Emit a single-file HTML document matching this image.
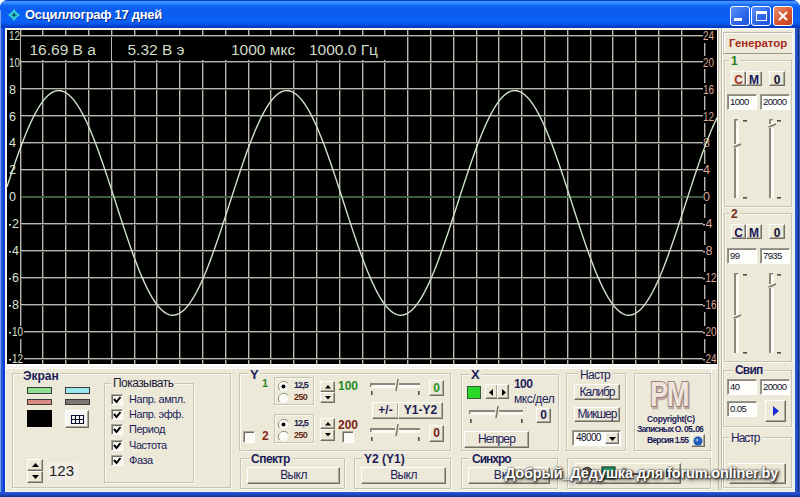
<!DOCTYPE html>
<html><head><meta charset="utf-8">
<style>
*{margin:0;padding:0;box-sizing:border-box}
html,body{width:800px;height:497px;overflow:hidden;background:#fff;font-family:"Liberation Sans",sans-serif}
.a{position:absolute}
#win{position:absolute;left:0;top:0;width:800px;height:497px;background:#0b3fd6;border-radius:8px 8px 0 0;overflow:hidden}
#title{position:absolute;left:0;top:0;width:800px;height:28px;
 background:linear-gradient(#0a3fc8 0px,#0a3fc8 1px,#3d93ff 1px,#3a8ffc 3px,#1268f6 5px,#0a5cf0 10px,#0c62f6 20px,#0a58ec 24px,#063ec8 26px,#0038c0 28px)}
#client{position:absolute;left:5px;top:28px;width:790px;height:464px;background:#ece9d8;border-left:1px solid #f6f7fb;border-bottom:1px solid #f6f7fb}
.tb{position:absolute;top:6px;width:20px;height:20px;border:1px solid #fff;border-radius:3px}
.grp{position:absolute;border:1px solid #c6c4b4;box-shadow:inset 1px 1px 0 #f8f8f2, 1px 1px 0 #f8f8f2}
.gl{position:absolute;background:#ece9d8;padding:0 2px;font-size:12px;line-height:12px;white-space:nowrap}
.btn{position:absolute;background:#ece9d8;border:1px solid;border-color:#fff #716f64 #716f64 #fff;box-shadow:inset -1px -1px 0 #aca899;
 font-size:12px;color:#1c1c5a;text-align:center;white-space:nowrap}
.ed{position:absolute;background:#fdfdfa;border:1px solid;border-color:#9a988a #fff #fff #9a988a;box-shadow:inset 1px 1px 0 #8a887c;
 font-size:9.5px;line-height:14px;color:#101028;padding-left:2px;white-space:nowrap;letter-spacing:-0.6px}
.t{position:absolute;white-space:nowrap}
.bold{font-weight:bold}
.navy{color:#1c1c5a}
.trk{position:absolute;border:1px solid;border-color:#8a887c #fff #fff #8a887c;background:#ece9d8}
.tick{position:absolute;background:#333;}
.cb{position:absolute;width:13px;height:13px;background:#fbfbf6;border:1px solid;border-color:#aca899 #fff #fff #aca899;box-shadow:inset 1px 1px 0 #716f64}
</style></head><body>
<div id="win">
 <div id="title">
  <svg class="a" style="left:8px;top:9px" width="12" height="12" viewBox="0 0 12 12">
   <path d="M6 0 L8.5 3.5 L12 6 L8.5 8.5 L6 12 L3.5 8.5 L0 6 L3.5 3.5 Z" fill="#3ad8d0"/>
   <path d="M6 2.5 L7.5 4.5 L9.5 6 L7.5 7.5 L6 9.5 L4.5 7.5 L2.5 6 L4.5 4.5 Z" fill="#1aa8b8"/>
   <circle cx="6" cy="6" r="1.3" fill="#0a3a60"/>
  </svg>
  <div class="t bold" style="left:25px;top:7px;font-size:13px;color:#fff;letter-spacing:-0.3px;text-shadow:1px 1px 0 #0a2a8a">Осциллограф 17 дней</div>
  <div class="tb" style="left:730px;background:linear-gradient(135deg,#5b93f8,#2a64e8 60%,#1b52d8)"><div class="a" style="left:3px;top:11px;width:8px;height:3px;background:#fff"></div></div>
  <div class="tb" style="left:751px;background:linear-gradient(135deg,#5b93f8,#2a64e8 60%,#1b52d8)"><div class="a" style="left:4px;top:4px;width:11px;height:10px;border:1px solid #fff;border-top-width:3px"></div></div>
  <div class="tb" style="left:773px;background:linear-gradient(135deg,#e8906c,#d6532e 60%,#c04020)">
   <svg class="a" style="left:3px;top:3px" width="12" height="12"><path d="M2 2 L10 10 M10 2 L2 10" stroke="#fff" stroke-width="2"/></svg></div>
 </div>
 <div id="client"></div>
 <div class="a" style="left:0;top:10px;width:1px;height:487px;background:#7aa0f0"></div>
 <div class="a" style="left:1px;top:28px;width:2px;height:469px;background:#2458dc"></div>
 <div class="a" style="left:793px;top:28px;width:2px;height:464px;background:#eef0f6"></div>
 <div class="a" style="left:795px;top:28px;width:5px;height:469px;background:linear-gradient(90deg,#2a58d0 0px,#2450c8 2px,#163a9c 3px,#0c2878 4px,#6a8ad8 5px)"></div>
 <div class="a" style="left:0px;top:492px;width:800px;height:5px;background:linear-gradient(#2a5ad8,#1a44b8 3px,#0c2c88 5px)"></div>
 <!-- canvas frame -->
 <div class="a" style="left:5px;top:28px;width:714px;height:338px;border:2px solid #f4f3ee;border-right-color:#fff;border-bottom-color:#fff"></div>
<svg style="position:absolute;left:7px;top:30px" width="710" height="334">
<rect x="0" y="0" width="710" height="334" fill="#000"/>
<rect x="13" y="0" width="1" height="334" fill="#b8b7b0"/><rect x="14" y="0" width="1" height="334" fill="#4a4946"/>
<rect x="35" y="0" width="1" height="334" fill="#b8b7b0"/><rect x="36" y="0" width="1" height="334" fill="#4a4946"/>
<rect x="58" y="0" width="1" height="334" fill="#b8b7b0"/><rect x="59" y="0" width="1" height="334" fill="#4a4946"/>
<rect x="81" y="0" width="1" height="334" fill="#b8b7b0"/><rect x="82" y="0" width="1" height="334" fill="#4a4946"/>
<rect x="104" y="0" width="1" height="334" fill="#b8b7b0"/><rect x="105" y="0" width="1" height="334" fill="#4a4946"/>
<rect x="127" y="0" width="1" height="334" fill="#b8b7b0"/><rect x="128" y="0" width="1" height="334" fill="#4a4946"/>
<rect x="149" y="0" width="1" height="334" fill="#b8b7b0"/><rect x="150" y="0" width="1" height="334" fill="#4a4946"/>
<rect x="172" y="0" width="1" height="334" fill="#b8b7b0"/><rect x="173" y="0" width="1" height="334" fill="#4a4946"/>
<rect x="195" y="0" width="1" height="334" fill="#b8b7b0"/><rect x="196" y="0" width="1" height="334" fill="#4a4946"/>
<rect x="218" y="0" width="1" height="334" fill="#b8b7b0"/><rect x="219" y="0" width="1" height="334" fill="#4a4946"/>
<rect x="241" y="0" width="1" height="334" fill="#b8b7b0"/><rect x="242" y="0" width="1" height="334" fill="#4a4946"/>
<rect x="263" y="0" width="1" height="334" fill="#b8b7b0"/><rect x="264" y="0" width="1" height="334" fill="#4a4946"/>
<rect x="286" y="0" width="1" height="334" fill="#b8b7b0"/><rect x="287" y="0" width="1" height="334" fill="#4a4946"/>
<rect x="309" y="0" width="1" height="334" fill="#b8b7b0"/><rect x="310" y="0" width="1" height="334" fill="#4a4946"/>
<rect x="332" y="0" width="1" height="334" fill="#b8b7b0"/><rect x="333" y="0" width="1" height="334" fill="#4a4946"/>
<rect x="355" y="0" width="1" height="334" fill="#b8b7b0"/><rect x="356" y="0" width="1" height="334" fill="#4a4946"/>
<rect x="377" y="0" width="1" height="334" fill="#b8b7b0"/><rect x="378" y="0" width="1" height="334" fill="#4a4946"/>
<rect x="400" y="0" width="1" height="334" fill="#b8b7b0"/><rect x="401" y="0" width="1" height="334" fill="#4a4946"/>
<rect x="423" y="0" width="1" height="334" fill="#b8b7b0"/><rect x="424" y="0" width="1" height="334" fill="#4a4946"/>
<rect x="446" y="0" width="1" height="334" fill="#b8b7b0"/><rect x="447" y="0" width="1" height="334" fill="#4a4946"/>
<rect x="469" y="0" width="1" height="334" fill="#b8b7b0"/><rect x="470" y="0" width="1" height="334" fill="#4a4946"/>
<rect x="491" y="0" width="1" height="334" fill="#b8b7b0"/><rect x="492" y="0" width="1" height="334" fill="#4a4946"/>
<rect x="514" y="0" width="1" height="334" fill="#b8b7b0"/><rect x="515" y="0" width="1" height="334" fill="#4a4946"/>
<rect x="537" y="0" width="1" height="334" fill="#b8b7b0"/><rect x="538" y="0" width="1" height="334" fill="#4a4946"/>
<rect x="560" y="0" width="1" height="334" fill="#b8b7b0"/><rect x="561" y="0" width="1" height="334" fill="#4a4946"/>
<rect x="583" y="0" width="1" height="334" fill="#b8b7b0"/><rect x="584" y="0" width="1" height="334" fill="#4a4946"/>
<rect x="605" y="0" width="1" height="334" fill="#b8b7b0"/><rect x="606" y="0" width="1" height="334" fill="#4a4946"/>
<rect x="628" y="0" width="1" height="334" fill="#b8b7b0"/><rect x="629" y="0" width="1" height="334" fill="#4a4946"/>
<rect x="651" y="0" width="1" height="334" fill="#b8b7b0"/><rect x="652" y="0" width="1" height="334" fill="#4a4946"/>
<rect x="674" y="0" width="1" height="334" fill="#b8b7b0"/><rect x="675" y="0" width="1" height="334" fill="#4a4946"/>
<rect x="697" y="0" width="1" height="334" fill="#b8b7b0"/><rect x="698" y="0" width="1" height="334" fill="#4a4946"/>
<rect x="14" y="5" width="682" height="1" fill="#b8b7b0"/><rect x="14" y="6" width="682" height="1" fill="#4a4946"/>
<rect x="14" y="31" width="682" height="1" fill="#b8b7b0"/><rect x="14" y="32" width="682" height="1" fill="#4a4946"/>
<rect x="14" y="58" width="682" height="1" fill="#b8b7b0"/><rect x="14" y="59" width="682" height="1" fill="#4a4946"/>
<rect x="14" y="85" width="682" height="1" fill="#b8b7b0"/><rect x="14" y="86" width="682" height="1" fill="#4a4946"/>
<rect x="14" y="112" width="682" height="1" fill="#b8b7b0"/><rect x="14" y="113" width="682" height="1" fill="#4a4946"/>
<rect x="14" y="139" width="682" height="1" fill="#b8b7b0"/><rect x="14" y="140" width="682" height="1" fill="#4a4946"/>
<rect x="14" y="166" width="682" height="2" fill="#3f5e3b"/>
<rect x="14" y="193" width="682" height="1" fill="#b8b7b0"/><rect x="14" y="194" width="682" height="1" fill="#4a4946"/>
<rect x="14" y="220" width="682" height="1" fill="#b8b7b0"/><rect x="14" y="221" width="682" height="1" fill="#4a4946"/>
<rect x="14" y="247" width="682" height="1" fill="#b8b7b0"/><rect x="14" y="248" width="682" height="1" fill="#4a4946"/>
<rect x="14" y="274" width="682" height="1" fill="#b8b7b0"/><rect x="14" y="275" width="682" height="1" fill="#4a4946"/>
<rect x="14" y="301" width="682" height="1" fill="#b8b7b0"/><rect x="14" y="302" width="682" height="1" fill="#4a4946"/>
<rect x="14" y="328" width="682" height="1" fill="#b8b7b0"/><rect x="14" y="329" width="682" height="1" fill="#4a4946"/>
<rect x="14" y="7" width="90" height="23" fill="#000"/>
<rect x="105" y="7" width="92" height="23" fill="#000"/>
<rect x="198" y="7" width="201" height="23" fill="#000"/>
<rect x="1" y="0" width="12" height="13" fill="#000"/>
<text x="2" y="9.700000000000003" font-family="Liberation Sans" font-size="12.5" textLength="11" lengthAdjust="spacingAndGlyphs" fill="#d8e4d0">12</text>
<rect x="1" y="26" width="12" height="13" fill="#000"/>
<text x="2" y="36.64" font-family="Liberation Sans" font-size="12.5" textLength="11" lengthAdjust="spacingAndGlyphs" fill="#d8e4d0">10</text>
<rect x="1" y="53" width="11" height="13" fill="#000"/>
<text x="2" y="63.58" font-family="Liberation Sans" font-size="12.5" fill="#d8e4d0">8</text>
<rect x="1" y="80" width="11" height="13" fill="#000"/>
<text x="2" y="90.52000000000001" font-family="Liberation Sans" font-size="12.5" fill="#d8e4d0">6</text>
<rect x="1" y="107" width="11" height="13" fill="#000"/>
<text x="2" y="117.45999999999998" font-family="Liberation Sans" font-size="12.5" fill="#d8e4d0">4</text>
<rect x="1" y="134" width="11" height="13" fill="#000"/>
<text x="2" y="144.4" font-family="Liberation Sans" font-size="12.5" fill="#d8e4d0">2</text>
<rect x="1" y="161" width="11" height="13" fill="#000"/>
<text x="2" y="171.34" font-family="Liberation Sans" font-size="12.5" fill="#d8e4d0">0</text>
<rect x="1" y="188" width="11" height="13" fill="#000"/>
<rect x="2" y="194" width="2" height="1.5" fill="#d8e4d0"/>
<text x="5" y="198.28" font-family="Liberation Sans" font-size="12.5" fill="#d8e4d0">2</text>
<rect x="1" y="215" width="11" height="13" fill="#000"/>
<rect x="2" y="221" width="2" height="1.5" fill="#d8e4d0"/>
<text x="5" y="225.22" font-family="Liberation Sans" font-size="12.5" fill="#d8e4d0">4</text>
<rect x="1" y="242" width="11" height="13" fill="#000"/>
<rect x="2" y="248" width="2" height="1.5" fill="#d8e4d0"/>
<text x="5" y="252.16000000000003" font-family="Liberation Sans" font-size="12.5" fill="#d8e4d0">6</text>
<rect x="1" y="269" width="11" height="13" fill="#000"/>
<rect x="2" y="275" width="2" height="1.5" fill="#d8e4d0"/>
<text x="5" y="279.1" font-family="Liberation Sans" font-size="12.5" fill="#d8e4d0">8</text>
<rect x="1" y="296" width="16" height="13" fill="#000"/>
<rect x="2" y="302" width="2" height="1.5" fill="#d8e4d0"/>
<text x="5" y="306.04" font-family="Liberation Sans" font-size="12.5" textLength="11" lengthAdjust="spacingAndGlyphs" fill="#d8e4d0">10</text>
<rect x="1" y="323" width="16" height="13" fill="#000"/>
<rect x="2" y="329" width="2" height="1.5" fill="#d8e4d0"/>
<text x="5" y="332.98" font-family="Liberation Sans" font-size="12.5" textLength="11" lengthAdjust="spacingAndGlyphs" fill="#d8e4d0">12</text>
<rect x="696" y="0" width="14" height="13" fill="#000"/>
<text x="696" y="9.700000000000003" font-family="Liberation Sans" font-size="12.5" textLength="11" lengthAdjust="spacingAndGlyphs" fill="#dca99a">24</text>
<rect x="696" y="26" width="14" height="13" fill="#000"/>
<text x="696" y="36.64" font-family="Liberation Sans" font-size="12.5" textLength="11" lengthAdjust="spacingAndGlyphs" fill="#dca99a">20</text>
<rect x="696" y="53" width="14" height="13" fill="#000"/>
<text x="696" y="63.58" font-family="Liberation Sans" font-size="12.5" textLength="11" lengthAdjust="spacingAndGlyphs" fill="#dca99a">16</text>
<rect x="696" y="80" width="14" height="13" fill="#000"/>
<text x="696" y="90.52000000000001" font-family="Liberation Sans" font-size="12.5" textLength="11" lengthAdjust="spacingAndGlyphs" fill="#dca99a">12</text>
<rect x="696" y="107" width="14" height="13" fill="#000"/>
<text x="696" y="117.45999999999998" font-family="Liberation Sans" font-size="12.5" fill="#dca99a">8</text>
<rect x="696" y="134" width="14" height="13" fill="#000"/>
<text x="696" y="144.4" font-family="Liberation Sans" font-size="12.5" fill="#dca99a">4</text>
<rect x="696" y="161" width="14" height="13" fill="#000"/>
<text x="696" y="171.34" font-family="Liberation Sans" font-size="12.5" fill="#dca99a">0</text>
<rect x="696" y="188" width="14" height="13" fill="#000"/>
<rect x="696" y="194" width="2" height="1.5" fill="#dca99a"/>
<text x="698.5" y="198.28" font-family="Liberation Sans" font-size="12.5" fill="#dca99a">4</text>
<rect x="696" y="215" width="14" height="13" fill="#000"/>
<rect x="696" y="221" width="2" height="1.5" fill="#dca99a"/>
<text x="698.5" y="225.22" font-family="Liberation Sans" font-size="12.5" fill="#dca99a">8</text>
<rect x="696" y="242" width="14" height="13" fill="#000"/>
<rect x="696" y="248" width="2" height="1.5" fill="#dca99a"/>
<text x="698.5" y="252.16000000000003" font-family="Liberation Sans" font-size="12.5" textLength="11" lengthAdjust="spacingAndGlyphs" fill="#dca99a">12</text>
<rect x="696" y="269" width="14" height="13" fill="#000"/>
<rect x="696" y="275" width="2" height="1.5" fill="#dca99a"/>
<text x="698.5" y="279.1" font-family="Liberation Sans" font-size="12.5" textLength="11" lengthAdjust="spacingAndGlyphs" fill="#dca99a">16</text>
<rect x="696" y="296" width="14" height="13" fill="#000"/>
<rect x="696" y="302" width="2" height="1.5" fill="#dca99a"/>
<text x="698.5" y="306.04" font-family="Liberation Sans" font-size="12.5" textLength="11" lengthAdjust="spacingAndGlyphs" fill="#dca99a">20</text>
<rect x="696" y="323" width="14" height="13" fill="#000"/>
<rect x="696" y="329" width="2" height="1.5" fill="#dca99a"/>
<text x="698.5" y="332.98" font-family="Liberation Sans" font-size="12.5" textLength="11" lengthAdjust="spacingAndGlyphs" fill="#dca99a">24</text>
<text x="22.5" y="24.5" font-family="Liberation Sans" font-size="15.5" fill="#cfdcc4">16.69 В а</text>
<text x="120.5" y="24.5" font-family="Liberation Sans" font-size="15.5" fill="#cfdcc4">5.32 В э</text>
<text x="224" y="24.5" font-family="Liberation Sans" font-size="15.5" fill="#cfdcc4">1000 мкс</text>
<text x="302" y="24.5" font-family="Liberation Sans" font-size="15.5" fill="#cfdcc4">1000.0 Гц</text>
<polyline fill="none" stroke="#cfe3cc" stroke-width="1.4" points="0.0,156.9 1.0,153.8 2.0,150.8 3.0,147.7 4.0,144.7 5.0,141.7 6.0,138.8 7.0,135.9 8.0,132.9 9.0,130.1 10.0,127.2 11.0,124.4 12.0,121.6 13.0,118.9 14.0,116.2 15.0,113.6 16.0,111.0 17.0,108.4 18.0,105.9 19.0,103.4 20.0,101.0 21.0,98.7 22.0,96.4 23.0,94.2 24.0,92.0 25.0,89.9 26.0,87.8 27.0,85.8 28.0,83.9 29.0,82.0 30.0,80.3 31.0,78.5 32.0,76.9 33.0,75.3 34.0,73.8 35.0,72.4 36.0,71.1 37.0,69.8 38.0,68.6 39.0,67.5 40.0,66.5 41.0,65.5 42.0,64.7 43.0,63.9 44.0,63.2 45.0,62.6 46.0,62.0 47.0,61.6 48.0,61.2 49.0,60.9 50.0,60.7 51.0,60.6 52.0,60.6 53.0,60.7 54.0,60.8 55.0,61.0 56.0,61.4 57.0,61.8 58.0,62.2 59.0,62.8 60.0,63.5 61.0,64.2 62.0,65.0 63.0,65.9 64.0,66.9 65.0,67.9 66.0,69.1 67.0,70.3 68.0,71.6 69.0,73.0 70.0,74.4 71.0,76.0 72.0,77.6 73.0,79.2 74.0,81.0 75.0,82.8 76.0,84.7 77.0,86.6 78.0,88.6 79.0,90.7 80.0,92.8 81.0,95.0 82.0,97.3 83.0,99.6 84.0,102.0 85.0,104.4 86.0,106.9 87.0,109.4 88.0,112.0 89.0,114.6 90.0,117.3 91.0,120.0 92.0,122.7 93.0,125.5 94.0,128.4 95.0,131.2 96.0,134.1 97.0,137.0 98.0,140.0 99.0,142.9 100.0,145.9 101.0,148.9 102.0,152.0 103.0,155.0 104.0,158.1 105.0,161.2 106.0,164.2 107.0,167.3 108.0,170.4 109.0,173.5 110.0,176.6 111.0,179.7 112.0,182.8 113.0,185.9 114.0,188.9 115.0,192.0 116.0,195.0 117.0,198.1 118.0,201.1 119.0,204.1 120.0,207.0 121.0,209.9 122.0,212.9 123.0,215.7 124.0,218.6 125.0,221.4 126.0,224.2 127.0,226.9 128.0,229.6 129.0,232.2 130.0,234.8 131.0,237.4 132.0,239.9 133.0,242.4 134.0,244.8 135.0,247.1 136.0,249.4 137.0,251.6 138.0,253.8 139.0,255.9 140.0,258.0 141.0,260.0 142.0,261.9 143.0,263.8 144.0,265.5 145.0,267.3 146.0,268.9 147.0,270.5 148.0,272.0 149.0,273.4 150.0,274.7 151.0,276.0 152.0,277.2 153.0,278.3 154.0,279.3 155.0,280.3 156.0,281.1 157.0,281.9 158.0,282.6 159.0,283.2 160.0,283.8 161.0,284.2 162.0,284.6 163.0,284.9 164.0,285.1 165.0,285.2 166.0,285.2 167.0,285.1 168.0,285.0 169.0,284.8 170.0,284.4 171.0,284.0 172.0,283.6 173.0,283.0 174.0,282.3 175.0,281.6 176.0,280.8 177.0,279.9 178.0,278.9 179.0,277.9 180.0,276.7 181.0,275.5 182.0,274.2 183.0,272.8 184.0,271.4 185.0,269.8 186.0,268.2 187.0,266.6 188.0,264.8 189.0,263.0 190.0,261.1 191.0,259.2 192.0,257.2 193.0,255.1 194.0,253.0 195.0,250.8 196.0,248.5 197.0,246.2 198.0,243.8 199.0,241.4 200.0,238.9 201.0,236.4 202.0,233.8 203.0,231.2 204.0,228.5 205.0,225.8 206.0,223.1 207.0,220.3 208.0,217.4 209.0,214.6 210.0,211.7 211.0,208.8 212.0,205.8 213.0,202.9 214.0,199.9 215.0,196.9 216.0,193.8 217.0,190.8 218.0,187.7 219.0,184.6 220.0,181.6 221.0,178.5 222.0,175.4 223.0,172.3 224.0,169.2 225.0,166.1 226.0,163.0 227.0,159.9 228.0,156.9 229.0,153.8 230.0,150.8 231.0,147.7 232.0,144.7 233.0,141.7 234.0,138.8 235.0,135.9 236.0,132.9 237.0,130.1 238.0,127.2 239.0,124.4 240.0,121.6 241.0,118.9 242.0,116.2 243.0,113.6 244.0,111.0 245.0,108.4 246.0,105.9 247.0,103.4 248.0,101.0 249.0,98.7 250.0,96.4 251.0,94.2 252.0,92.0 253.0,89.9 254.0,87.8 255.0,85.8 256.0,83.9 257.0,82.0 258.0,80.3 259.0,78.5 260.0,76.9 261.0,75.3 262.0,73.8 263.0,72.4 264.0,71.1 265.0,69.8 266.0,68.6 267.0,67.5 268.0,66.5 269.0,65.5 270.0,64.7 271.0,63.9 272.0,63.2 273.0,62.6 274.0,62.0 275.0,61.6 276.0,61.2 277.0,60.9 278.0,60.7 279.0,60.6 280.0,60.6 281.0,60.7 282.0,60.8 283.0,61.0 284.0,61.4 285.0,61.8 286.0,62.2 287.0,62.8 288.0,63.5 289.0,64.2 290.0,65.0 291.0,65.9 292.0,66.9 293.0,67.9 294.0,69.1 295.0,70.3 296.0,71.6 297.0,73.0 298.0,74.4 299.0,76.0 300.0,77.6 301.0,79.2 302.0,81.0 303.0,82.8 304.0,84.7 305.0,86.6 306.0,88.6 307.0,90.7 308.0,92.8 309.0,95.0 310.0,97.3 311.0,99.6 312.0,102.0 313.0,104.4 314.0,106.9 315.0,109.4 316.0,112.0 317.0,114.6 318.0,117.3 319.0,120.0 320.0,122.7 321.0,125.5 322.0,128.4 323.0,131.2 324.0,134.1 325.0,137.0 326.0,140.0 327.0,142.9 328.0,145.9 329.0,148.9 330.0,152.0 331.0,155.0 332.0,158.1 333.0,161.2 334.0,164.2 335.0,167.3 336.0,170.4 337.0,173.5 338.0,176.6 339.0,179.7 340.0,182.8 341.0,185.9 342.0,188.9 343.0,192.0 344.0,195.0 345.0,198.1 346.0,201.1 347.0,204.1 348.0,207.0 349.0,209.9 350.0,212.9 351.0,215.7 352.0,218.6 353.0,221.4 354.0,224.2 355.0,226.9 356.0,229.6 357.0,232.2 358.0,234.8 359.0,237.4 360.0,239.9 361.0,242.4 362.0,244.8 363.0,247.1 364.0,249.4 365.0,251.6 366.0,253.8 367.0,255.9 368.0,258.0 369.0,260.0 370.0,261.9 371.0,263.8 372.0,265.5 373.0,267.3 374.0,268.9 375.0,270.5 376.0,272.0 377.0,273.4 378.0,274.7 379.0,276.0 380.0,277.2 381.0,278.3 382.0,279.3 383.0,280.3 384.0,281.1 385.0,281.9 386.0,282.6 387.0,283.2 388.0,283.8 389.0,284.2 390.0,284.6 391.0,284.9 392.0,285.1 393.0,285.2 394.0,285.2 395.0,285.1 396.0,285.0 397.0,284.8 398.0,284.4 399.0,284.0 400.0,283.6 401.0,283.0 402.0,282.3 403.0,281.6 404.0,280.8 405.0,279.9 406.0,278.9 407.0,277.9 408.0,276.7 409.0,275.5 410.0,274.2 411.0,272.8 412.0,271.4 413.0,269.8 414.0,268.2 415.0,266.6 416.0,264.8 417.0,263.0 418.0,261.1 419.0,259.2 420.0,257.2 421.0,255.1 422.0,253.0 423.0,250.8 424.0,248.5 425.0,246.2 426.0,243.8 427.0,241.4 428.0,238.9 429.0,236.4 430.0,233.8 431.0,231.2 432.0,228.5 433.0,225.8 434.0,223.1 435.0,220.3 436.0,217.4 437.0,214.6 438.0,211.7 439.0,208.8 440.0,205.8 441.0,202.9 442.0,199.9 443.0,196.9 444.0,193.8 445.0,190.8 446.0,187.7 447.0,184.6 448.0,181.6 449.0,178.5 450.0,175.4 451.0,172.3 452.0,169.2 453.0,166.1 454.0,163.0 455.0,159.9 456.0,156.9 457.0,153.8 458.0,150.8 459.0,147.7 460.0,144.7 461.0,141.7 462.0,138.8 463.0,135.9 464.0,132.9 465.0,130.1 466.0,127.2 467.0,124.4 468.0,121.6 469.0,118.9 470.0,116.2 471.0,113.6 472.0,111.0 473.0,108.4 474.0,105.9 475.0,103.4 476.0,101.0 477.0,98.7 478.0,96.4 479.0,94.2 480.0,92.0 481.0,89.9 482.0,87.8 483.0,85.8 484.0,83.9 485.0,82.0 486.0,80.3 487.0,78.5 488.0,76.9 489.0,75.3 490.0,73.8 491.0,72.4 492.0,71.1 493.0,69.8 494.0,68.6 495.0,67.5 496.0,66.5 497.0,65.5 498.0,64.7 499.0,63.9 500.0,63.2 501.0,62.6 502.0,62.0 503.0,61.6 504.0,61.2 505.0,60.9 506.0,60.7 507.0,60.6 508.0,60.6 509.0,60.7 510.0,60.8 511.0,61.0 512.0,61.4 513.0,61.8 514.0,62.2 515.0,62.8 516.0,63.5 517.0,64.2 518.0,65.0 519.0,65.9 520.0,66.9 521.0,67.9 522.0,69.1 523.0,70.3 524.0,71.6 525.0,73.0 526.0,74.4 527.0,76.0 528.0,77.6 529.0,79.2 530.0,81.0 531.0,82.8 532.0,84.7 533.0,86.6 534.0,88.6 535.0,90.7 536.0,92.8 537.0,95.0 538.0,97.3 539.0,99.6 540.0,102.0 541.0,104.4 542.0,106.9 543.0,109.4 544.0,112.0 545.0,114.6 546.0,117.3 547.0,120.0 548.0,122.7 549.0,125.5 550.0,128.4 551.0,131.2 552.0,134.1 553.0,137.0 554.0,140.0 555.0,142.9 556.0,145.9 557.0,148.9 558.0,152.0 559.0,155.0 560.0,158.1 561.0,161.2 562.0,164.2 563.0,167.3 564.0,170.4 565.0,173.5 566.0,176.6 567.0,179.7 568.0,182.8 569.0,185.9 570.0,188.9 571.0,192.0 572.0,195.0 573.0,198.1 574.0,201.1 575.0,204.1 576.0,207.0 577.0,209.9 578.0,212.9 579.0,215.7 580.0,218.6 581.0,221.4 582.0,224.2 583.0,226.9 584.0,229.6 585.0,232.2 586.0,234.8 587.0,237.4 588.0,239.9 589.0,242.4 590.0,244.8 591.0,247.1 592.0,249.4 593.0,251.6 594.0,253.8 595.0,255.9 596.0,258.0 597.0,260.0 598.0,261.9 599.0,263.8 600.0,265.5 601.0,267.3 602.0,268.9 603.0,270.5 604.0,272.0 605.0,273.4 606.0,274.7 607.0,276.0 608.0,277.2 609.0,278.3 610.0,279.3 611.0,280.3 612.0,281.1 613.0,281.9 614.0,282.6 615.0,283.2 616.0,283.8 617.0,284.2 618.0,284.6 619.0,284.9 620.0,285.1 621.0,285.2 622.0,285.2 623.0,285.1 624.0,285.0 625.0,284.8 626.0,284.4 627.0,284.0 628.0,283.6 629.0,283.0 630.0,282.3 631.0,281.6 632.0,280.8 633.0,279.9 634.0,278.9 635.0,277.9 636.0,276.7 637.0,275.5 638.0,274.2 639.0,272.8 640.0,271.4 641.0,269.8 642.0,268.2 643.0,266.6 644.0,264.8 645.0,263.0 646.0,261.1 647.0,259.2 648.0,257.2 649.0,255.1 650.0,253.0 651.0,250.8 652.0,248.5 653.0,246.2 654.0,243.8 655.0,241.4 656.0,238.9 657.0,236.4 658.0,233.8 659.0,231.2 660.0,228.5 661.0,225.8 662.0,223.1 663.0,220.3 664.0,217.4 665.0,214.6 666.0,211.7 667.0,208.8 668.0,205.8 669.0,202.9 670.0,199.9 671.0,196.9 672.0,193.8 673.0,190.8 674.0,187.7 675.0,184.6 676.0,181.6 677.0,178.5 678.0,175.4 679.0,172.3 680.0,169.2 681.0,166.1 682.0,163.0 683.0,159.9 684.0,156.9 685.0,153.8 686.0,150.8 687.0,147.7 688.0,144.7 689.0,141.7 690.0,138.8 691.0,135.9 692.0,132.9 693.0,130.1 694.0,127.2 695.0,124.4 696.0,121.6 697.0,118.9 698.0,116.2 699.0,113.6 700.0,111.0 701.0,108.4 702.0,105.9 703.0,103.4 704.0,101.0 705.0,98.7 706.0,96.4 707.0,94.2 708.0,92.0 709.0,89.9 710.0,87.8"/>
</svg>
<svg class="a" style="left:732px;top:117px" width="20" height="85"><rect x="2" y="2" width="2" height="79" fill="#8a887c"/><rect x="4" y="3" width="3" height="78" fill="#fbfbf6"/><rect x="2" y="2" width="4" height="1.5" fill="#8a887c"/><rect x="2" y="27" width="5" height="4" fill="#ece9d8"/><path d="M1.5 30 Q5 29 9 27" stroke="#77756a" stroke-width="1.5" fill="none"/><rect x="11" y="3" width="4" height="1.6" fill="#505048"/><rect x="11" y="80" width="4" height="1.6" fill="#505048"/></svg>
<svg class="a" style="left:767px;top:117px" width="20" height="85"><rect x="2" y="2" width="2" height="79" fill="#8a887c"/><rect x="4" y="3" width="3" height="78" fill="#fbfbf6"/><rect x="2" y="2" width="4" height="1.5" fill="#8a887c"/><rect x="2" y="7" width="5" height="4" fill="#ece9d8"/><path d="M1.5 10 Q5 9 9 7" stroke="#77756a" stroke-width="1.5" fill="none"/><rect x="10" y="3" width="4" height="1.6" fill="#505048"/><rect x="10" y="80" width="4" height="1.6" fill="#505048"/></svg>
<svg class="a" style="left:732px;top:271px" width="20" height="86"><rect x="2" y="2" width="2" height="80" fill="#8a887c"/><rect x="4" y="3" width="3" height="79" fill="#fbfbf6"/><rect x="2" y="2" width="4" height="1.5" fill="#8a887c"/><rect x="2" y="44" width="5" height="4" fill="#ece9d8"/><path d="M1.5 47 Q5 46 9 44" stroke="#77756a" stroke-width="1.5" fill="none"/><rect x="11" y="3" width="4" height="1.6" fill="#505048"/><rect x="11" y="81" width="4" height="1.6" fill="#505048"/></svg>
<svg class="a" style="left:767px;top:271px" width="20" height="86"><rect x="2" y="2" width="2" height="80" fill="#8a887c"/><rect x="4" y="3" width="3" height="79" fill="#fbfbf6"/><rect x="2" y="2" width="4" height="1.5" fill="#8a887c"/><rect x="2" y="13" width="5" height="4" fill="#ece9d8"/><path d="M1.5 16 Q5 15 9 13" stroke="#77756a" stroke-width="1.5" fill="none"/><rect x="10" y="3" width="4" height="1.6" fill="#505048"/><rect x="10" y="81" width="4" height="1.6" fill="#505048"/></svg>
<svg class="a" style="left:368px;top:377px" width="56" height="20"><rect x="2" y="6" width="50" height="2" fill="#8a887c"/><rect x="3" y="8" width="49" height="3" fill="#fbfbf6"/><rect x="2" y="6" width="1.5" height="4" fill="#8a887c"/><rect x="27" y="6" width="4" height="5" fill="#ece9d8"/><path d="M30 2 Q29 9 28 14" stroke="#77756a" stroke-width="1.5" fill="none"/><rect x="3" y="14" width="1.6" height="4" fill="#505048"/><rect x="50" y="14" width="1.6" height="4" fill="#505048"/></svg>
<svg class="a" style="left:368px;top:422px" width="56" height="20"><rect x="2" y="6" width="50" height="2" fill="#8a887c"/><rect x="3" y="8" width="49" height="3" fill="#fbfbf6"/><rect x="2" y="6" width="1.5" height="4" fill="#8a887c"/><rect x="27" y="6" width="4" height="5" fill="#ece9d8"/><path d="M30 2 Q29 9 28 14" stroke="#77756a" stroke-width="1.5" fill="none"/><rect x="3" y="15" width="1.6" height="4" fill="#505048"/><rect x="50" y="15" width="1.6" height="4" fill="#505048"/></svg>
<svg class="a" style="left:467px;top:404px" width="60" height="20"><rect x="2" y="6" width="54" height="2" fill="#8a887c"/><rect x="3" y="8" width="53" height="3" fill="#fbfbf6"/><rect x="2" y="6" width="1.5" height="4" fill="#8a887c"/><rect x="28" y="6" width="4" height="5" fill="#ece9d8"/><path d="M31 2 Q30 9 29 14" stroke="#77756a" stroke-width="1.5" fill="none"/><rect x="3" y="15" width="1.6" height="4" fill="#505048"/><rect x="54" y="15" width="1.6" height="4" fill="#505048"/></svg>
 <!-- panel borders -->
 <div class="a" style="left:719px;top:28px;width:76px;height:2px;background:#f6f6f2"></div>
 <div class="a" style="left:5px;top:366px;width:714px;height:2px;background:#f4f3ec"></div>
 <div class="a" style="left:5px;top:368px;width:714px;height:1px;background:#fff"></div>
 <div class="a" style="left:711px;top:368px;width:1px;height:122px;background:#fff"></div>
 <div class="a" style="left:718px;top:28px;width:1px;height:462px;background:#b9b7a8"></div>
 <div class="a" style="left:721px;top:28px;width:1px;height:462px;background:#b9b7a8"></div>
 <div class="a" style="left:722px;top:28px;width:1px;height:462px;background:#fff"></div>

 <!-- RIGHT PANEL -->
 <div class="a" style="left:723px;top:32px;width:70px;height:22px;border:1px solid;border-color:#b9b7a8 #fff #9a988a #c9c7b8;box-shadow:inset 1px 1px 0 #fff"></div>
 <div class="t bold" style="left:729px;top:37px;font-size:11.5px;line-height:13px;color:#a82a1a;letter-spacing:-0.05px">Генератор</div>
 <div class="grp" style="left:724px;top:60px;width:68px;height:147px"></div>
 <div class="gl bold" style="left:729px;top:55px;color:#1f7a1f;font-size:12px;line-height:12px">1</div>
 <div class="btn bold" style="left:731px;top:71px;width:15px;height:15px;line-height:16px;color:#a83020">С</div>
 <div class="btn bold" style="left:746px;top:71px;width:16px;height:15px;line-height:16px;color:#14145a">М</div>
 <div class="btn bold" style="left:769px;top:71px;width:16px;height:15px;line-height:16px;color:#101030">0</div>
 <div class="ed" style="left:727px;top:94px;width:30px;height:16px">1000</div>
 <div class="ed" style="left:760px;top:94px;width:30px;height:16px">20000</div>
 <div class="grp" style="left:724px;top:213px;width:68px;height:149px"></div>
 <div class="gl bold" style="left:729px;top:208px;color:#7a2a1a;font-size:12px;line-height:12px">2</div>
 <div class="btn bold" style="left:731px;top:224px;width:15px;height:15px;line-height:16px;color:#14145a">С</div>
 <div class="btn bold" style="left:746px;top:224px;width:16px;height:15px;line-height:16px;color:#14145a">М</div>
 <div class="btn bold" style="left:769px;top:224px;width:16px;height:15px;line-height:16px;color:#101030">0</div>
 <div class="ed" style="left:727px;top:248px;width:30px;height:16px">99</div>
 <div class="ed" style="left:760px;top:248px;width:30px;height:16px">7935</div>
 <div class="grp" style="left:723px;top:370px;width:69px;height:57px"></div>
 <div class="gl bold navy" style="left:733px;top:364px;font-size:12px;line-height:12px;letter-spacing:-0.8px">Свип</div>
 <div class="ed" style="left:727px;top:379px;width:30px;height:16px">40</div>
 <div class="ed" style="left:760px;top:379px;width:30px;height:16px">20000</div>
 <div class="ed" style="left:727px;top:401px;width:30px;height:16px">0.05</div>
 <div class="btn" style="left:765px;top:400px;width:21px;height:22px"><svg class="a" style="left:6px;top:5px" width="8" height="10"><path d="M1 0 L7 5 L1 10Z" fill="#1a2ad0"/></svg></div>
 <div class="grp" style="left:723px;top:437px;width:69px;height:51px"></div>
 <div class="gl navy" style="left:729px;top:432px;font-size:12px;line-height:12px;letter-spacing:-1px">Настр</div>
 <div class="btn" style="left:729px;top:463px;width:57px;height:21px"></div>

 <!-- BOTTOM PANEL -->
 <div class="grp" style="left:12px;top:373px;width:219px;height:115px"></div>
 <div class="gl bold navy" style="left:21px;top:370px;font-size:12px">Экран</div>

 <!-- Экран contents -->
 <div class="a" style="left:27px;top:387px;width:25px;height:7px;border:1px solid #3a3a3a;background:#8ee08e"></div>
 <div class="a" style="left:65px;top:387px;width:25px;height:7px;border:1px solid #3a3a3a;background:#98e8f0"></div>
 <div class="a" style="left:27px;top:399px;width:25px;height:6px;border:1px solid #3a3a3a;background:#d88880"></div>
 <div class="a" style="left:65px;top:399px;width:25px;height:6px;border:1px solid #3a3a3a;background:#7a7a72"></div>
 <div class="a" style="left:27px;top:410px;width:25px;height:17px;background:#000"></div>
 <div class="btn" style="left:65px;top:410px;width:24px;height:18px;background:#f6f6f2"></div>
 <svg class="a" style="left:70px;top:414px" width="15" height="11"><path d="M1 1.5H14M1 5.5H14M1 9.5H14M1.5 1V10M5.5 1V10M9.5 1V10M13.5 1V10" stroke="#101030" stroke-width="1.1"/></svg>
 <div class="btn" style="left:27px;top:459px;width:16px;height:12px"><svg class="a" style="left:4px;top:3px" width="7" height="4"><path d="M0 4L3.5 0L7 4Z" fill="#000"/></svg></div>
 <div class="btn" style="left:27px;top:471px;width:16px;height:12px"><svg class="a" style="left:4px;top:3px" width="7" height="4"><path d="M0 0L3.5 4L7 0Z" fill="#000"/></svg></div>
 <div class="a" style="left:47px;top:462px;width:32px;height:18px;background:#efede4"></div><div class="t" style="left:49px;top:462px;font-size:15px;color:#222">123</div>
 <!-- Показывать -->
 <div class="grp" style="left:104px;top:383px;width:90px;height:100px"></div>
 <div class="gl" style="left:111px;top:377px;font-size:12px;color:#1c1c3a;letter-spacing:-0.55px">Показывать</div>
  <div class="cb" style="left:111px;top:394px;width:12px;height:11px;background:#f6f6f0"><svg class="a" style="left:1px;top:1px" width="9" height="8"><path d="M1 3L3.5 6L7.5 1" fill="none" stroke="#000" stroke-width="2"/></svg></div>
 <div class="t" style="left:129px;top:393px;font-size:11px;letter-spacing:-0.45px;color:#1c1c5a">Напр. ампл.</div>
 <div class="cb" style="left:111px;top:409px;width:12px;height:11px;background:#f6f6f0"><svg class="a" style="left:1px;top:1px" width="9" height="8"><path d="M1 3L3.5 6L7.5 1" fill="none" stroke="#000" stroke-width="2"/></svg></div>
 <div class="t" style="left:129px;top:408px;font-size:11px;letter-spacing:-0.45px;color:#1c1c5a">Напр. эфф.</div>
 <div class="cb" style="left:111px;top:424px;width:12px;height:11px;background:#f6f6f0"><svg class="a" style="left:1px;top:1px" width="9" height="8"><path d="M1 3L3.5 6L7.5 1" fill="none" stroke="#000" stroke-width="2"/></svg></div>
 <div class="t" style="left:129px;top:423px;font-size:11px;letter-spacing:-0.45px;color:#1c1c5a">Период</div>
 <div class="cb" style="left:111px;top:440px;width:12px;height:11px;background:#f6f6f0"><svg class="a" style="left:1px;top:1px" width="9" height="8"><path d="M1 3L3.5 6L7.5 1" fill="none" stroke="#000" stroke-width="2"/></svg></div>
 <div class="t" style="left:129px;top:439px;font-size:11px;letter-spacing:-0.45px;color:#1c1c5a">Частота</div>
 <div class="cb" style="left:111px;top:455px;width:12px;height:11px;background:#f6f6f0"><svg class="a" style="left:1px;top:1px" width="9" height="8"><path d="M1 3L3.5 6L7.5 1" fill="none" stroke="#000" stroke-width="2"/></svg></div>
 <div class="t" style="left:129px;top:454px;font-size:11px;letter-spacing:-0.45px;color:#1c1c5a">Фаза</div>

 <!-- Y group -->
 <div class="grp" style="left:239px;top:373px;width:212px;height:78px"></div>
 <div class="gl bold navy" style="left:248px;top:369px;font-size:13px">Y</div>
 <div class="t bold" style="left:262px;top:377px;font-size:11px;color:#2a8a2a">1</div>
 <div class="grp" style="left:274px;top:377px;width:40px;height:28px"></div>
  <svg class="a" style="left:278px;top:381px" width="12" height="12"><path d="M10 2.5A5 5 0 0 0 1.5 9" fill="none" stroke="#8a887c"/><circle cx="5.5" cy="5.5" r="4.5" fill="#fbfbf6"/><circle cx="5.5" cy="5.5" r="2" fill="#000"/></svg>
 <div class="t" style="left:294px;top:380px;font-size:9px;font-weight:bold;letter-spacing:-0.9px;color:#1c1c4a">12,5</div>
 <svg class="a" style="left:278px;top:393px" width="12" height="12"><path d="M10 2.5A5 5 0 0 0 1.5 9" fill="none" stroke="#8a887c"/><circle cx="5.5" cy="5.5" r="4.5" fill="#fbfbf6"/></svg>
 <div class="t" style="left:294px;top:392px;font-size:9px;font-weight:bold;letter-spacing:-0.6px;color:#6a2a18">250</div>
 <svg class="a" style="left:278px;top:419px" width="12" height="12"><path d="M10 2.5A5 5 0 0 0 1.5 9" fill="none" stroke="#8a887c"/><circle cx="5.5" cy="5.5" r="4.5" fill="#fbfbf6"/><circle cx="5.5" cy="5.5" r="2" fill="#000"/></svg>
 <div class="t" style="left:294px;top:418px;font-size:9px;font-weight:bold;letter-spacing:-0.9px;color:#1c1c4a">12,5</div>
 <svg class="a" style="left:278px;top:431px" width="12" height="12"><path d="M10 2.5A5 5 0 0 0 1.5 9" fill="none" stroke="#8a887c"/><circle cx="5.5" cy="5.5" r="4.5" fill="#fbfbf6"/></svg>
 <div class="t" style="left:294px;top:430px;font-size:9px;font-weight:bold;letter-spacing:-0.6px;color:#6a2a18">250</div>

 <div class="btn" style="left:320px;top:381px;width:15px;height:11px"><svg class="a" style="left:4px;top:3px" width="6" height="4"><path d="M0 3.5L3 0L6 3.5Z" fill="#000"/></svg></div>
 <div class="btn" style="left:320px;top:392px;width:15px;height:11px"><svg class="a" style="left:4px;top:3px" width="6" height="4"><path d="M0 0L3 3.5L6 0Z" fill="#000"/></svg></div>
 <div class="t bold" style="left:338px;top:379px;font-size:12px;color:#2a8a2a">100</div>
 <div class="grp" style="left:274px;top:414px;width:40px;height:29px"></div>
 <div class="btn" style="left:320px;top:418px;width:15px;height:11px"><svg class="a" style="left:4px;top:3px" width="6" height="4"><path d="M0 3.5L3 0L6 3.5Z" fill="#000"/></svg></div>
 <div class="btn" style="left:320px;top:429px;width:15px;height:12px"><svg class="a" style="left:4px;top:3px" width="6" height="4"><path d="M0 0L3 3.5L6 0Z" fill="#000"/></svg></div>
 <div class="t bold" style="left:338px;top:418px;font-size:12px;color:#7a2418">200</div>
 <div class="cb" style="left:243px;top:431px;width:12px;height:12px"></div>
 <div class="t bold" style="left:262px;top:429px;font-size:12px;color:#8a2a1a">2</div>
 <div class="cb" style="left:342px;top:431px;width:12px;height:12px"></div>
 <!-- horizontal sliders -->
 <div class="btn bold" style="left:429px;top:380px;width:15px;height:16px;line-height:14px;font-size:12px;color:#2a922a">0</div>
 <div class="btn bold" style="left:372px;top:402px;width:27px;height:17px;line-height:15px;font-size:12px">+/-</div>
 <div class="btn bold" style="left:398px;top:402px;width:45px;height:17px;line-height:15px;font-size:12px">Y1-Y2</div>
 <div class="btn bold" style="left:429px;top:425px;width:15px;height:17px;line-height:15px;font-size:12px;color:#7a2418">0</div>
 <!-- Спектр / Y2 -->
 <div class="grp" style="left:240px;top:458px;width:105px;height:31px"></div>
 <div class="gl bold navy" style="left:249px;top:453px;font-size:12px;letter-spacing:-0.5px">Спектр</div>
 <div class="btn" style="left:247px;top:467px;width:93px;height:17px;line-height:15px;letter-spacing:-0.6px">Выкл</div>
 <div class="grp" style="left:354px;top:458px;width:97px;height:31px"></div>
 <div class="gl bold navy" style="left:362px;top:453px;font-size:12px">Y2 (Y1)</div>
 <div class="btn" style="left:361px;top:467px;width:85px;height:17px;line-height:15px;letter-spacing:-0.6px">Выкл</div>
 <!-- X group -->
 <div class="grp" style="left:461px;top:374px;width:98px;height:77px"></div>
 <div class="gl bold navy" style="left:469px;top:369px;font-size:13px">X</div>
 <div class="a" style="left:467px;top:386px;width:14px;height:13px;border:1px solid #3a5a3a;background:#2ad82a"></div>
 <div class="btn" style="left:485px;top:384px;width:13px;height:15px"><svg class="a" style="left:3px;top:4px" width="4" height="7"><path d="M4 0L0 3.5L4 7Z" fill="#000"/></svg></div>
 <div class="btn" style="left:497px;top:384px;width:12px;height:15px"><svg class="a" style="left:4px;top:4px" width="4" height="7"><path d="M0 0L4 3.5L0 7Z" fill="#000"/></svg></div>
 <div class="t bold navy" style="left:514px;top:377px;font-size:12px;letter-spacing:-0.6px">100</div>
 <div class="t navy" style="left:514px;top:392px;font-size:12px;letter-spacing:-0.4px">мкс/дел</div>
 <div class="btn bold" style="left:536px;top:408px;width:15px;height:15px;line-height:13px;font-size:12px">0</div>
 <div class="btn" style="left:464px;top:431px;width:65px;height:17px;line-height:15px;letter-spacing:-0.8px">Непрер</div>
 <div class="grp" style="left:461px;top:458px;width:97px;height:31px"></div>
 <div class="gl bold navy" style="left:470px;top:453px;font-size:12px;letter-spacing:-1px">Синхро</div>
 <div class="btn" style="left:468px;top:467px;width:82px;height:17px;line-height:15px;text-indent:-10px">Вкл</div>
 <!-- Настр -->
 <div class="grp" style="left:566px;top:373px;width:60px;height:78px"></div>
 <div class="gl navy" style="left:578px;top:369px;font-size:12px;letter-spacing:-0.7px">Настр</div>
 <div class="btn" style="left:574px;top:384px;width:46px;height:16px;line-height:14px;letter-spacing:-1px">Калибр</div>
 <div class="btn" style="left:574px;top:407px;width:46px;height:15px;line-height:13px;letter-spacing:-1px">Микшер</div>
 <div class="ed" style="left:572px;top:430px;width:49px;height:16px;line-height:14px;font-size:10px;padding-left:3px">48000</div>
 <div class="btn" style="left:605px;top:432px;width:14px;height:12px"><svg class="a" style="left:3px;top:4px" width="7" height="4"><path d="M0 0L3.5 4L7 0Z" fill="#000"/></svg></div>
 <!-- PM panel -->
 <div class="grp" style="left:634px;top:373px;width:77px;height:78px"></div>
 <svg class="a" style="left:646px;top:374px" width="52" height="40"><g transform="translate(4,32) scale(0.78,1)" font-family="Liberation Sans" font-weight="bold" font-size="35" letter-spacing="-2">
 <text x="1.5" y="1.5" fill="#c0a8a0" stroke="#c0a8a0" stroke-width="2.4">PM</text>
 <text x="0" y="0" fill="#efe4de" stroke="#9a8078" stroke-width="2.2" paint-order="stroke">PM</text></g></svg>
 <div class="t bold navy" style="left:647px;top:414px;font-size:8.5px;letter-spacing:-0.35px">Copyright(C)</div>
 <div class="t bold navy" style="left:637px;top:424px;font-size:8.5px;letter-spacing:-0.75px">Записных О. 05..06</div>
 <div class="t bold navy" style="left:647px;top:435px;font-size:8.5px;letter-spacing:-0.8px">Версия 1.55</div>
 <div class="btn" style="left:691px;top:434px;width:14px;height:13px"><svg class="a" style="left:1px;top:1px" width="10" height="10"><circle cx="5" cy="5" r="4.5" fill="#1a5ab8"/><circle cx="4" cy="4" r="1.5" fill="#9ad"/></svg></div>
 <!-- toolbar group -->
 <div class="grp" style="left:567px;top:458px;width:144px;height:31px"></div>
 <div class="btn" style="left:575px;top:463px;width:106px;height:21px"></div>
 <svg class="a" style="left:576px;top:464px" width="104" height="19">
  <path d="M7 5 Q12 1 16 6 L16 14 L7 14 Z" fill="#5a5a50" stroke="#2a2a2a" stroke-width="1"/>
  <rect x="26" y="3" width="13" height="12" fill="#1f9a6a" stroke="#1a3a2a" stroke-width="1.2"/>
  <rect x="28" y="5" width="9" height="7" fill="#2ab880"/>
  <path d="M46 4 Q50 2 52 6 L52 13 L46 13Z" fill="#9a9a90"/>
  <path d="M56 10 L70 10 M66 6 L70 10 L66 14" stroke="#1a1a1a" stroke-width="1.6" fill="none"/>
  <path d="M72 6 L80 6 L80 14 L72 14Z" fill="#b8a040"/>
  <path d="M90 5 Q95 3 96 8 L96 13 L90 13Z" fill="#3a3a3a"/>
 </svg>
 <!-- watermark -->
 <div class="t bold" style="left:505px;top:465px;font-size:14.5px;letter-spacing:-0.15px;color:#fff;text-shadow:0 0 2px #222,1px 1px 2px #111,1px 2px 4px #444">Добрый_Дедушка для forum.onliner.by</div>
</div>
</body></html>
